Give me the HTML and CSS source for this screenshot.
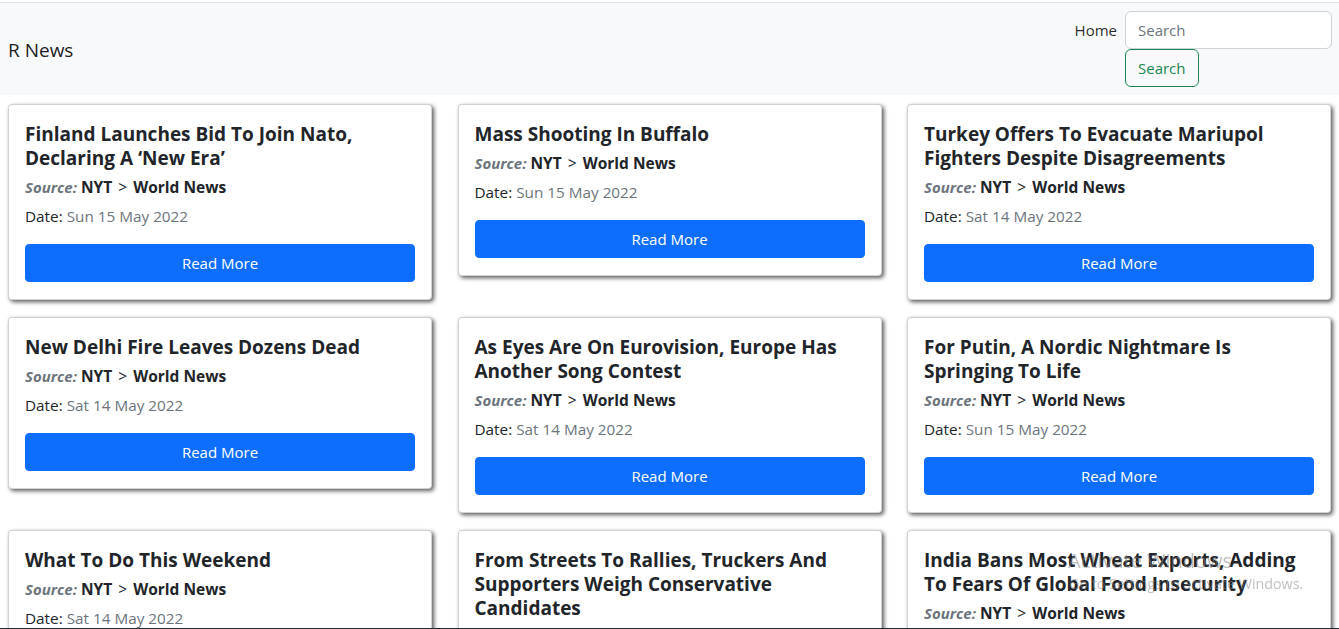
FILE: index.html
```html
<!DOCTYPE html>
<html lang="en">
<head>
<meta charset="utf-8">
<title>R News</title>
<link rel="stylesheet" href="styles.css">
</head>
<body>
<div class="topline"></div>
<nav class="navbar">
  <a class="brand" href="#">R News</a>
  <div class="nav-right">
    <a class="nav-link" href="#">Home</a>
    <form class="search-form">
      <input class="search-input" type="search" placeholder="Search">
      <button class="btn-outline" type="button">Search</button>
    </form>
  </div>
</nav>
<main class="grid">
  <div class="card">
    <h5 class="title">Finland Launches Bid To Join Nato, Declaring A ‘New Era’</h5>
    <h6 class="source"><em>Source:</em> NYT <span class="gt">&gt;</span> World News</h6>
    <p class="date">Date: <span class="muted">Sun 15 May 2022</span></p>
    <a class="btn-primary" href="#">Read More</a>
  </div>
  <div class="card">
    <h5 class="title">Mass Shooting In Buffalo</h5>
    <h6 class="source"><em>Source:</em> NYT <span class="gt">&gt;</span> World News</h6>
    <p class="date">Date: <span class="muted">Sun 15 May 2022</span></p>
    <a class="btn-primary" href="#">Read More</a>
  </div>
  <div class="card">
    <h5 class="title">Turkey Offers To Evacuate Mariupol Fighters Despite Disagreements</h5>
    <h6 class="source"><em>Source:</em> NYT <span class="gt">&gt;</span> World News</h6>
    <p class="date">Date: <span class="muted">Sat 14 May 2022</span></p>
    <a class="btn-primary" href="#">Read More</a>
  </div>
  <div class="card">
    <h5 class="title">New Delhi Fire Leaves Dozens Dead</h5>
    <h6 class="source"><em>Source:</em> NYT <span class="gt">&gt;</span> World News</h6>
    <p class="date">Date: <span class="muted">Sat 14 May 2022</span></p>
    <a class="btn-primary" href="#">Read More</a>
  </div>
  <div class="card">
    <h5 class="title">As Eyes Are On Eurovision, Europe Has Another Song Contest</h5>
    <h6 class="source"><em>Source:</em> NYT <span class="gt">&gt;</span> World News</h6>
    <p class="date">Date: <span class="muted">Sat 14 May 2022</span></p>
    <a class="btn-primary" href="#">Read More</a>
  </div>
  <div class="card">
    <h5 class="title">For Putin, A Nordic Nightmare Is Springing To Life</h5>
    <h6 class="source"><em>Source:</em> NYT <span class="gt">&gt;</span> World News</h6>
    <p class="date">Date: <span class="muted">Sun 15 May 2022</span></p>
    <a class="btn-primary" href="#">Read More</a>
  </div>
  <div class="card">
    <h5 class="title">What To Do This Weekend</h5>
    <h6 class="source"><em>Source:</em> NYT <span class="gt">&gt;</span> World News</h6>
    <p class="date">Date: <span class="muted">Sat 14 May 2022</span></p>
    <a class="btn-primary" href="#">Read More</a>
  </div>
  <div class="card">
    <h5 class="title">From Streets To Rallies, Truckers And Supporters Weigh Conservative Candidates</h5>
    <h6 class="source"><em>Source:</em> NYT <span class="gt">&gt;</span> World News</h6>
    <p class="date">Date: <span class="muted">Sat 14 May 2022</span></p>
    <a class="btn-primary" href="#">Read More</a>
  </div>
  <div class="card">
    <h5 class="title">India Bans Most Wheat Exports, Adding To Fears Of Global Food Insecurity</h5>
    <h6 class="source"><em>Source:</em> NYT <span class="gt">&gt;</span> World News</h6>
    <p class="date">Date: <span class="muted">Sat 14 May 2022</span></p>
    <a class="btn-primary" href="#">Read More</a>
  </div>
</main>
<div class="watermark">
  <div class="wm-title">Activate Windows</div>
  <div class="wm-sub">Go to Settings to activate Windows.</div>
</div>
<div class="taskbar-edge"></div>
</body>
</html>
```

FILE: styles.css
```css
* { box-sizing: border-box; }
html, body { margin: 0; padding: 0; }
body {
  font-family: "Open Sans", "Noto Sans", "Liberation Sans", sans-serif;
  font-size: 16px;
  line-height: 1.5;
  color: #212529;
  background: #fff;
  overflow: hidden;
  height: 629px;
}
.topline {
  height: 3px;
  border-bottom: 1px solid #dee2e6;
  background: #fff;
}
.navbar {
  background: #f8f9fa;
  display: flex;
  justify-content: space-between;
  align-items: center;
  padding: 8px 7px 8px 8px;
}
.brand {
  font-size: 19px;
  color: rgba(0,0,0,.9);
  text-decoration: none;
  line-height: 1.5;
  padding-top: 2px;
}
.nav-right {
  display: flex;
  align-items: flex-start;
  gap: 8px;
}
.nav-link {
  color: rgba(0,0,0,.85);
  text-decoration: none;
  font-size: 15px;
  line-height: 38px;
}
.search-form {
  width: 207px;
  display: flex;
  flex-wrap: wrap;
}
.search-input {
  width: 207px;
  height: 38px;
  border: 1px solid #ced4da;
  border-radius: 6px;
  padding: 6px 12px;
  font: inherit;
  font-size: 15px;
  color: #212529;
  background: #fff;
  outline: none;
}
.search-input::placeholder { color: #6c757d; }
.btn-outline {
  height: 38px;
  padding: 6px 12px;
  border: 1px solid #198754;
  border-radius: 6px;
  background: transparent;
  color: #198754;
  font: inherit;
  font-size: 15px;
}
.grid {
  display: grid;
  grid-template-columns: repeat(3, 424px);
  column-gap: 25.5px;
  row-gap: 17px;
  align-items: start;
  padding: 9px 0 0 8px;
}
.card {
  background: #fff;
  border: 1px solid rgba(0,0,0,.175);
  border-radius: 4px;
  box-shadow: 2px 2px 4px rgba(0,0,0,.65);
  padding: 16px 16px 17px;
}
.title {
  margin: 0 0 7px;
  padding-top: 1px;
  font-size: 19px;
  font-weight: 700;
  line-height: 24px;
  color: #212529;
}
.source {
  margin: 0 0 7px;
  font-size: 15.5px;
  font-weight: 700;
  line-height: 20px;
  color: #212529;
}
.source em { color: #6c757d; font-style: italic; font-size: 15px; }
.gt { font-weight: 400; margin: 0 2px; }
.date {
  margin: 0 0 16px;
  font-size: 15.3px;
  line-height: 24px;
}
.muted { color: #6c757d; }
.btn-primary {
  display: block;
  height: 38px;
  line-height: 36px;
  text-align: center;
  background: #0d6efd;
  border: 1px solid #0d6efd;
  border-radius: 4px;
  color: #fff;
  text-decoration: none;
  font-size: 15px;
}
.watermark {
  position: fixed;
  left: 1068px;
  top: 548px;
  color: rgba(130,130,130,.5);
  pointer-events: none;
  white-space: nowrap;
}
.wm-title { font-size: 20px; line-height: 26px; }
.wm-sub { font-size: 14.3px; line-height: 20px; margin-left: 1px; }
.taskbar-edge {
  position: fixed;
  left: 0;
  right: 0;
  bottom: 0;
  height: 1px;
  background: #1e2b33;
}
```
